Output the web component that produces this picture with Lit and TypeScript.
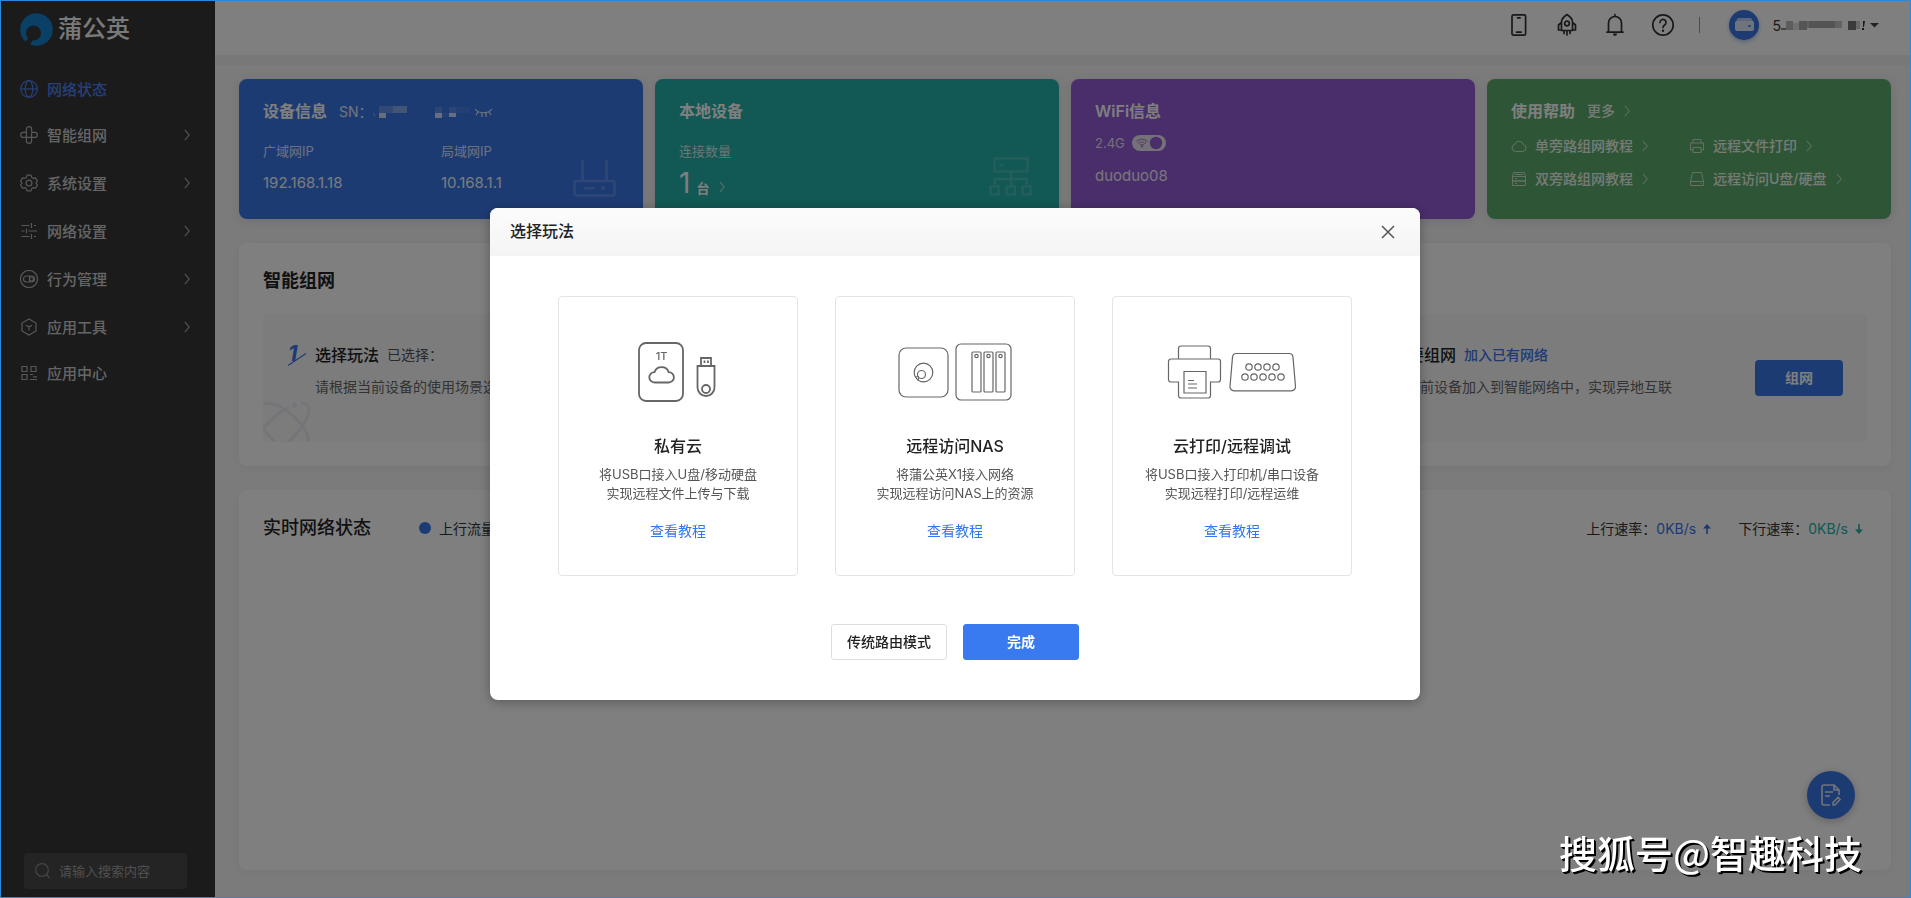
import { LitElement, html, css, svg, nothing } from "lit";
import { customElement } from "lit/decorators.js";

const chevron = html`<svg class="chev" viewBox="0 0 6 12" width="6" height="12" aria-hidden="true"><path d="M.8.8 5.2 6 .8 11.2" /></svg>`;

const navIcons: Record<string, unknown> = {
  globe: svg`<circle cx="9" cy="9" r="8.3"/><ellipse cx="9" cy="9" rx="3.8" ry="8.3"/><path d="M.7 9h16.6"/>`,
  mesh: svg`<path d="M6.4 11.4V3.2a2.6 2.6 0 0 1 5.2 0v2.6M6.4 6.4H3.2a2.5 2.5 0 0 0 0 5h8.2M11.6 6.4h3.2a2.5 2.5 0 0 1 0 5h-3.2M11.6 6.4v8.4a2.6 2.6 0 0 1-5.2 0V12"/>`,
  gear: svg`<circle cx="9" cy="9" r="2.9"/><path d="M7 1.2h4l.7 2.2 1.5.9 2.3-.5 1.9 3.3L15.9 9l1.5 1.9-1.9 3.3-2.300-.5-1.500.9-.7 2.200H7l-.7-2.200-1.500-.9-2.300.5L.6 10.900 2.100 9 .6 7.100l1.900-3.300 2.300.5 1.500-.9z" stroke-linejoin="round"/>`,
  sliders: svg`<path d="M1.500 3.500h8M14 3.500h2M11.500 1v5M1.500 9h3M8.500 9H17M6.500 6.700v4.600M1.500 14.500h8M14 14.500h2M11.500 12v5"/>`,
  behavior: svg`<circle cx="9" cy="9" r="8.500"/><rect x="3.500" y="6" width="11" height="6" rx="3"/><path d="M9.500 6v6"/><circle cx="11.500" cy="9" r="2"/>`,
  cube: svg`<path d="M9 1l7 4v8l-7 4-7-4V5zM6 7.200l3 1.900 3-1.900M9 9v3.500"/>`,
  apps: svg`<path d="M2 2.500h5v5H2zM11 2.500h5v5h-5zM2 10.500h5v5H2zM10 10.500h3M13 12.800h4M10 15.500h7"/>`,
};

interface NavItem { label: string; icon: string; sub?: boolean; on?: boolean }
const nav: NavItem[] = [
  { label: "网络状态", icon: "globe", on: true },
  { label: "智能组网", icon: "mesh", sub: true },
  { label: "系统设置", icon: "gear", sub: true },
  { label: "网络设置", icon: "sliders", sub: true },
  { label: "行为管理", icon: "behavior", sub: true },
  { label: "应用工具", icon: "cube", sub: true },
  { label: "应用中心", icon: "apps" },
];

@customElement("side-nav")
class SideNav extends LitElement {
  static styles = css`
    :host { display: flex; flex-direction: column; width: 215px; flex: none; background: #363636; box-sizing: border-box; }
    .logo { display: flex; align-items: center; gap: 5px; padding: 11px 20px 0; height: 36px; color: #fff; font-size: 24px; line-height: 36px; font-weight: 500; opacity: .95; }
    .logo svg { flex: none; }
    nav { display: flex; flex-direction: column; padding-top: 20px; }
    .item { display: flex; align-items: center; height: 44px; padding: 0 25px 0 20px; color: #cccccc; font-size: 15px; font-weight: 500; text-decoration: none; }
    .sub { height: 48px; }
    .item svg { fill: none; stroke: #b0b0b0; stroke-width: 1.2; flex: none; }
    .item span { flex: 1; margin: 0 0 2px 9px; }
    .item .chev { stroke: #a0a0a0; stroke-width: 1.2; }
    .item.on { color: #4a82f0; }
    .item.on svg { stroke: #4a82f0; }
    .search { display: flex; align-items: center; gap: 9px; margin: auto 28px 9px 24px; height: 36px; padding: 0 11px; border-radius: 4px; background: #484848; }
    .search svg { flex: none; fill: none; stroke: #8a8a8a; stroke-width: 1.2; }
    input { flex: 1; min-width: 0; border: 0; padding: 0; outline: 0; background: none; color: #fff; font: inherit; font-size: 13px; }
    input::placeholder { color: #a0a0a0; opacity: 1; }
  `;
  render() {
    return html`
      <div class="logo">
        <svg width="33" height="33" viewBox="0 0 33 33" aria-hidden="true">
          <circle cx="16.500" cy="16.500" r="16.300" fill="#1484d6" />
          <circle cx="13.500" cy="20" r="7.500" fill="#363636" />
          <path d="M8.500 24.500 4.800 30l4.500 3 3.400-6z" fill="#363636" />
        </svg>
        <span>蒲公英</span>
      </div>
      <nav>
        ${nav.map((n) => html`
          <a href="#" class="item ${n.sub ? "sub" : ""} ${n.on ? "on" : ""}">
            <svg width="18" height="18" viewBox="0 0 18 18" aria-hidden="true">${navIcons[n.icon]}</svg>
            <span>${n.label}</span>${n.sub ? chevron : nothing}
          </a>`)}
      </nav>
      <label class="search">
        <svg width="15" height="16" viewBox="0 0 15 16" aria-hidden="true"><circle cx="7" cy="7" r="6.300" /><path d="M11.500 11.500 14.500 15" /></svg>
        <input type="text" placeholder="请输入搜索内容" aria-label="搜索" />
      </label>`;
  }
}

@customElement("top-bar")
class TopBar extends LitElement {
  static styles = css`
    :host { display: flex; align-items: flex-start; justify-content: flex-end; height: 55px; flex: none; background: #fff; box-shadow: 0 10px 0 #f0f0f0; padding-right: 32px; box-sizing: border-box; }
    .row { display: flex; align-items: center; height: 50px; }
    button { border: 0; background: none; padding: 0; font: inherit; color: #333; display: flex; align-items: center; justify-content: center; }
    .ico { width: 48px; height: 48px; }
    .ico svg { fill: none; stroke: #333; stroke-width: 1.7; stroke-linejoin: round; stroke-linecap: round; }
    .ico .solid { fill: #333; stroke: none; }
    .bar { width: 1px; height: 16px; background: #999; margin: 0 29px 0 12px; }
    .avatar { width: 30px; height: 30px; border-radius: 50%; background: #3a76e2; box-shadow: 0 2px 4px rgba(58, 118, 226, .4); display: flex; align-items: center; justify-content: center; }
    .user { margin-left: 13px; font-size: 14px; }
    .user .caret { margin-left: 5px; }
  `;
  render() {
    return html`<div class="row">
      <button class="ico" aria-label="手机"><svg width="24" height="24" viewBox="0 0 24 24"><rect x="5" y="1.800" width="13.600" height="20.400" rx="1.500" /><path d="M10.500 4.800h2.600M9.500 19.200h4.600" /></svg></button>
      <button class="ico" aria-label="加速"><svg width="24" height="24" viewBox="0 0 24 24"><path d="M6.500 17.500V9c0-3 2.500-5.500 5.500-7.500 3 2 5.500 4.500 5.500 7.500v8.500zM6.500 9.500 3.500 12v5h3M17.500 9.500l3 2.500v5h-3M9 18v2.500M12 18v4M15 18v2.500" /><circle cx="12" cy="10.500" r="2.300" /></svg></button>
      <button class="ico" aria-label="消息"><svg width="24" height="24" viewBox="0 0 24 24"><path d="M4 19.200h16M5.500 19V10a6.500 6.500 0 0 1 13 0v9M12 1.500v2" /><path class="solid" d="M9.800 20.500h4.400l-1 2.200h-2.400z" /></svg></button>
      <button class="ico" aria-label="帮助"><svg width="24" height="24" viewBox="0 0 24 24"><circle cx="12" cy="12" r="10.200" /><path d="M9 9.500a3 3 0 1 1 4.600 2.500c-1 .7-1.600 1.200-1.600 2.500" /><circle class="solid" cx="12" cy="17.700" r="1.200" /></svg></button>
      <span class="bar"></span>
      <span class="avatar"><svg width="19" height="14" viewBox="0 0 19 14" aria-hidden="true"><path d="M3 0h13l2.500 4H.5z" fill="#b8cdf5" /><rect y="3" width="19" height="10" rx="2" fill="#e0e9fb" /><path d="M13 8h3" stroke="#3a76e2" stroke-width="1.500" /></svg></span>
      <button class="user" aria-label="账号">5
        <svg width="84" height="12" viewBox="0 0 84 12" aria-hidden="true">
          <path d="M0 9h6v2H0z" fill="#888" /><path d="M5 2h7v9H5z" fill="#bbb" /><path d="M12 4h7v7h-7z" fill="#e0e0e0" /><path d="M18 2h8v9h-8z" fill="#aaa" /><path d="M26 2h35v7H26z" fill="#c4c4c4" /><path d="M28 2h26v7H28z" fill="#a9a9a9" /><path d="M67 2h8v9h-8z" fill="#777" /><path d="M75 2h4v8h-4z" fill="#d0d0d0" /><path d="M82 2h2l-1 6h-1zM81 9h2v2h-2z" fill="#333" />
        </svg>
        <svg class="caret" width="9" height="5" viewBox="0 0 9 5" aria-hidden="true"><path d="M0 0h9L4.500 4.500z" fill="#444" /></svg>
      </button>
    </div>`;
  }
}

const helpIcons = {
  cloud: svg`<path d="M4.500 13.500a3.700 3.700 0 0 1-.6-7.300 4.300 4.300 0 0 1 8.200 0 3.700 3.700 0 0 1-.6 7.300z"/>`,
  printer: svg`<path d="M4 5V1.500h8V5M4 12H1.500V5h13v7H12M4 9.500h8v5H4z"/>`,
  server: svg`<path d="M2.500 1.500h11l1 4h-13zM1.500 5.500h13v4.500h-13zM1.500 10h13v4.500h-13zM4 7.700h2M4 12.300h2M4 3.500h8"/>`,
  disk: svg`<path d="M3.500 1.500h9l2 9v4h-13v-4zM1.500 10.500h13M11.500 12.600h1"/>`,
};
const help = [
  { t: "单旁路组网教程", i: helpIcons.cloud },
  { t: "远程文件打印", i: helpIcons.printer },
  { t: "双旁路组网教程", i: helpIcons.server },
  { t: "远程访问U盘/硬盘", i: helpIcons.disk },
];

@customElement("info-cards")
class InfoCards extends LitElement {
  static styles = css`
    :host { display: grid; grid-template-columns: repeat(4, minmax(0, 1fr)); gap: 12px; }
    .card { position: relative; min-height: 140px; box-sizing: border-box; padding: 20px 24px 0; border-radius: 8px; color: #fff; box-shadow: 0 2px 10px rgba(60, 40, 120, .12); }
    .blue { background: #3b77e6; }
    .teal { background: #24b0a8; }
    .purple { background: #925cd6; }
    .green { background: #5cac6c; }
    .head { display: flex; align-items: center; height: 24px; gap: 12px; }
    h2 { margin: 0; font-size: 16px; line-height: 24px; font-weight: 600; }
    .sn { display: flex; align-items: center; font-size: 14px; opacity: .85; }
    .two { display: grid; grid-template-columns: 1fr 1fr; }
    dl { margin: 12px 0 0; }
    dt { font-size: 13px; line-height: 20px; opacity: .8; padding-top: 6px; }
    dd { margin: 0; font-size: 15px; line-height: 20px; padding-top: 12px; opacity: .95; }
    .art { position: absolute; right: 27px; bottom: 22px; fill: none; stroke: #fff; opacity: .16; stroke-width: 2.6; }
    .chev { fill: none; stroke: currentColor; stroke-width: 1.1; opacity: .6; }
    .count { display: flex; align-items: baseline; gap: 6px; font-size: 28px; line-height: 32px; padding-top: 6px; }
    .count b { font-size: 13px; font-weight: 600; }
    .count .chev { margin-left: 4px; }
    .wifi { display: flex; align-items: center; gap: 7px; font-size: 13px; line-height: 20px; margin-top: 10px; }
    .wifi span { opacity: .8; }
    .switch { position: relative; display: flex; }
    .switch input { position: absolute; inset: 0; margin: 0; opacity: 0; }
    .name { font-size: 15px; line-height: 20px; margin-top: 13px; opacity: .9; }
    a { color: inherit; text-decoration: none; display: flex; align-items: center; font-size: 14px; font-weight: 500; line-height: 20px; opacity: .9; }
    .more { gap: 9px; }
    .links { display: grid; grid-template-columns: 1fr 1fr; row-gap: 13px; margin-top: 13px; }
    .links .lead { fill: none; stroke: #fff; opacity: .75; margin-right: 8px; }
    .links .chev { margin-left: 9px; }
  `;
  render() {
    return html`
      <section class="card blue">
        <div class="head"><h2>设备信息</h2>
          <div class="sn">SN：
            <svg width="120" height="14" viewBox="0 0 120 14" aria-hidden="true">
              <g fill="#fff"><path d="M6 2h14v7H6z" opacity=".25" /><path d="M20 2h14v7H20z" opacity=".45" /><path d="M6 9h7v5H6z" opacity=".9" /><path d="M0 8l3 4H1z" opacity=".4" /><path d="M62 3h7v6h-7zM76 3h7v6h-7z" opacity=".18" /><path d="M62 9h7v5h-7zM76 9h7v4h-7z" opacity=".9" /><path d="M83 3h14v6H83zM69 9h7v4h-7z" opacity=".08" /></g>
              <path d="M102 5c4 5 13 5 17 0M105 8l-2 3M109 9v4M113 9v4M116 8l2 3" fill="none" stroke="#fff" stroke-width="1.200" />
            </svg>
          </div>
        </div>
        <div class="two">
          <dl><dt>广域网IP</dt><dd>192.168.1.18</dd></dl>
          <dl><dt>局域网IP</dt><dd>10.168.1.1</dd></dl>
        </div>
        <svg class="art" width="43" height="38" viewBox="0 0 43 38" aria-hidden="true"><rect x="1.500" y="22" width="40" height="14.500" rx="2" /><path d="M9.500 1v21M33.500 1v21M11 29.200h11" /><circle cx="30" cy="29.200" r=".8" /></svg>
      </section>
      <section class="card teal">
        <div class="head"><h2>本地设备</h2></div>
        <dl><dt>连接数量</dt></dl>
        <div class="count">1<b>台</b>${chevron}</div>
        <svg class="art" width="43" height="40" viewBox="0 0 43 40" aria-hidden="true"><path d="M5.500 1.500h33v13h-33zM10 8h5M22 15v14M5.800 28v-6h32v6M1.500 29.500h8v8h-8zM17.800 29.500h8v8h-8zM33.500 29.500h8v8h-8z" /></svg>
      </section>
      <section class="card purple">
        <div class="head"><h2>WiFi信息</h2></div>
        <div class="wifi"><span>2.4G</span>
          <label class="switch"><input type="checkbox" role="switch" aria-label="2.4G" checked />
            <svg width="34" height="16" viewBox="0 0 34 16" aria-hidden="true"><rect width="34" height="16" rx="8" fill="#e9e4f0" /><circle cx="24" cy="8" r="6.200" fill="#925cd6" /><g fill="none" stroke="#a88bcb" stroke-width="1.100"><path d="M4.500 6.500q5.500-4.500 11 0M6.200 8.500q3.800-3 7.600 0M8 10.300q2-1.500 4 0" /></g><circle cx="10" cy="11.500" r=".9" fill="#925cd6" /></svg>
          </label>
        </div>
        <div class="name">duoduo08</div>
      </section>
      <section class="card green">
        <div class="head"><h2>使用帮助</h2><a href="#" class="more">更多 ${chevron}</a></div>
        <div class="links">${help.map((h) => html`<a href="#"><svg class="lead" width="16" height="16" viewBox="0 0 16 16" aria-hidden="true">${h.i}</svg>${h.t}${chevron}</a>`)}</div>
      </section>`;
  }
}

const plays = [
  {
    title: "私有云", lines: ["将USB口接入U盘/移动硬盘", "实现远程文件上传与下载"],
    art: html`<svg width="80" height="60" viewBox="0 0 80 60"><g stroke-width="1.800"><rect x="1" y="1" width="44" height="58" rx="7" /><path d="M16.500 40.500a5.200 5.200 0 0 1 0-10.400 7.600 7.600 0 0 1 14.200 0 5.200 5.200 0 0 1 0 10.400z" /><path d="M59.500 24h17v21.500a8.500 8.500 0 0 1-17 0zM63 24v-8h10v8" /><circle cx="68" cy="47" r="4" /><path d="M66.500 18.500v2.500M70 18.500v2.500" /></g><text x="23.500" y="17.500">1T</text></svg>`,
  },
  {
    title: "远程访问NAS", lines: ["将蒲公英X1接入网络", "实现远程访问NAS上的资源"],
    art: html`<svg width="114" height="60" viewBox="0 0 114 60"><g stroke-width="1.200"><rect x="1" y="6" width="49" height="49" rx="7" /><rect x="58" y="2" width="55" height="56" rx="5" /><circle cx="25.500" cy="30.500" r="9.300" /><circle cx="23.500" cy="32.500" r="4" /><path d="M17 35l4-.5M20 38.500l.5-2.500" /><rect x="74" y="10" width="9" height="40" rx="1" /><rect x="86" y="10" width="9" height="40" rx="1" /><rect x="98" y="10" width="9" height="40" rx="1" /><circle cx="78.500" cy="14" r="1.700" /><circle cx="90.500" cy="14" r="1.700" /><circle cx="102.500" cy="14" r="1.700" /></g></svg>`,
  },
  {
    title: "云打印/远程调试", lines: ["将USB口接入打印机/串口设备", "实现远程打印/远程运维"],
    art: html`<svg width="130" height="60" viewBox="0 0 130 60"><g stroke-width="1.200"><path d="M11.500 17V6.500a2.500 2.500 0 0 1 2.500-2.500h27a2.500 2.500 0 0 1 2.500 2.500V17M11.500 40H4a2.500 2.500 0 0 1-2.500-2.500v-18A2.500 2.500 0 0 1 4 17h47a2.500 2.500 0 0 1 2.500 2.500v18a2.500 2.500 0 0 1-2.500 2.500h-7.500v13.500a2.500 2.500 0 0 1-2.500 2.500H14a2.500 2.500 0 0 1-2.500-2.500zM17 29.500h22v21.500H17zM21 38.500h6M21 42h9M21 46h9" /><path d="M69.500 11.500h52.500a4 4 0 0 1 4 3.600l2.500 29.400a4 4 0 0 1-4 4.300H67a4 4 0 0 1-4-4.300l2.500-29.400a4 4 0 0 1 4-3.600z" />${[82, 91, 100, 109].map((x) => svg`<circle cx=${x} cy="25" r="3.200"/>`)}${[78, 87, 96, 105, 114].map((x) => svg`<circle cx=${x} cy="35" r="3.200"/>`)}</g></svg>`,
  },
];

@customElement("play-dialog")
class PlayDialog extends LitElement {
  static styles = css`
    :host { position: fixed; inset: 0; background: rgba(0, 0, 0, .5); display: grid; place-items: center; padding: 10px 1px 0 0; box-sizing: border-box; }
    .box { width: 930px; max-width: 96vw; background: #fff; border-radius: 8px; overflow: hidden; box-shadow: 0 2px 12px rgba(0, 0, 0, .3); }
    header { display: flex; align-items: center; justify-content: space-between; height: 48px; padding: 0 24px 0 20px; background: linear-gradient(#fcfcfc, #f4f4f4); }
    h2 { margin: 0; font-size: 16px; line-height: 24px; font-weight: 500; color: #222; padding-bottom: 2px; }
    button { font: inherit; padding: 0; }
    .close { border: 0; background: none; display: flex; width: 16px; height: 16px; align-items: center; justify-content: center; }
    .close svg { stroke: #555; stroke-width: 1.5; fill: none; }
    .cards { display: flex; justify-content: center; gap: 37px; padding: 40px 20px 48px; }
    .card { width: 240px; min-height: 280px; box-sizing: border-box; border: 1px solid #e4e4e4; border-radius: 4px; display: flex; flex-direction: column; align-items: center; padding-top: 45px; text-align: center; }
    .card svg { fill: none; stroke: #666; }
    .card svg text { font-size: 11px; font-weight: 500; fill: #666; stroke: none; text-anchor: middle; }
    h3 { margin: 32px 0 7px; font-size: 16px; line-height: 24px; font-weight: 500; color: #222; }
    p { margin: 0; font-size: 13px; line-height: 19px; color: #555; }
    a { margin-top: 18px; font-size: 14px; line-height: 20px; color: #3577ee; text-decoration: none; }
    footer { display: flex; justify-content: center; gap: 16px; padding-bottom: 40px; }
    .btn { width: 116px; height: 36px; border-radius: 3px; font-size: 14px; font-weight: 500; border: 1px solid #dedede; background: #fff; color: #222; padding-bottom: 2px; }
    .primary { background: #3a7af0; border-color: #3a7af0; color: #fff; font-weight: 600; }
  `;
  render() {
    return html`<div class="box" role="dialog" aria-modal="true" aria-labelledby="t">
      <header><h2 id="t">选择玩法</h2>
        <button class="close" aria-label="关闭"><svg width="14" height="14" viewBox="0 0 14 14"><path d="M1 1l12 12M13 1 1 13" /></svg></button></header>
      <div class="cards">${plays.map((p) => html`<article class="card">${p.art}<h3>${p.title}</h3>${p.lines.map((l) => html`<p>${l}</p>`)}<a href="#">查看教程</a></article>`)}</div>
      <footer><button class="btn">传统路由模式</button><button class="btn primary">完成</button></footer>
    </div>`;
  }
}

@customElement("app-root")
class AppRoot extends LitElement {
  static styles = css`
    :host { display: flex; min-height: 100vh; background: #f6f6f6; color: #333; font-family: Inter, "Noto Sans CJK SC", sans-serif; }
    .main { flex: 1; min-width: 0; display: flex; flex-direction: column; }
    .content { flex: 1; display: flex; flex-direction: column; gap: 24px; padding: 24px 20px 28px 24px; }
    .panel { background: #fff; border-radius: 8px; padding: 24px; box-shadow: 0 2px 10px rgba(0, 0, 0, .04); }
    h2 { margin: 0; font-size: 18px; line-height: 28px; font-weight: 600; color: #222; }
    .steps { position: relative; display: flex; align-items: stretch; justify-content: space-between; min-height: 128px; box-sizing: border-box; margin-top: 19px; padding: 28px 24px 0; background: #f9f9f9; border-radius: 4px; }
    .orbit { position: absolute; left: 0; bottom: 0; fill: none; stroke: #e7eaf3; stroke-width: 2.8; }
    .step { display: flex; gap: 6px; }
    .num { flex: none; width: 22px; height: 26px; overflow: visible; }
    .num text { font-size: 22px; font-weight: 700; font-style: italic; fill: #3a74e8; }
    .num path { stroke: #3a74e8; stroke-width: 1.2; }
    .line { display: flex; align-items: center; gap: 8px; height: 24px; font-size: 14px; color: #555; }
    .line b { font-size: 16px; font-weight: 500; color: #222; }
    .line a { color: #3a74e8; text-decoration: none; font-weight: 500; }
    p { margin: 11px 0 0; font-size: 14px; line-height: 20px; color: #666; }
    .go { margin: 18px 0 0 77px; width: 88px; height: 36px; border: 0; border-radius: 4px; background: #3b77e6; color: #fff; font: inherit; font-size: 14px; font-weight: 600; padding: 0 0 2px; }
    .traffic { flex: 1; }
    .bar { display: flex; align-items: center; font-size: 14px; }
    .bar h2 { font-weight: 500; }
    .bar i { width: 12px; height: 12px; border-radius: 50%; background: #3b77e6; margin: 0 8px 0 48px; }
    .rates { margin-left: auto; display: flex; gap: 27px; padding-right: 4px; }
    .rates span { display: flex; align-items: center; }
    .rates em { font-style: normal; margin-right: 7px; }
    .rates svg { margin-top: 2px; }
    .up { color: #3a74e8; fill: #3a74e8; }
    .down { color: #24b0a8; fill: #24b0a8; }
    .fab { position: fixed; right: 56px; bottom: 79px; width: 48px; height: 48px; border: 0; padding: 0; border-radius: 50%; background: #3b77e6; display: flex; align-items: center; justify-content: center; box-shadow: 0 2px 8px rgba(0, 0, 0, .25); }
    .fab svg { fill: none; stroke: #e4e9f5; stroke-width: 1.6; }
    .frame { position: fixed; inset: 0; border: 1px solid #2b86dc; pointer-events: none; }
    .mark { position: fixed; right: 49px; bottom: 18px; font-family: "Noto Sans CJK SC", sans-serif; font-size: 38px; line-height: 56px; font-weight: 500; color: #fff; text-shadow: 2px 2px 0 #000, 1px 1px 0 #000; pointer-events: none; }
  `;
  render() {
    return html`
      <side-nav></side-nav>
      <div class="main">
        <top-bar></top-bar>
        <div class="content">
          <info-cards></info-cards>
          <section class="panel">
            <h2>智能组网</h2>
            <div class="steps">
              <svg class="orbit" width="48" height="40" viewBox="0 0 48 40" aria-hidden="true"><path d="M0 2C18-2 44 22 46 40M26 5C16 10 4 20-2 30M38 1.500c10-1 10 8 4 18C37 29 30 36 24 41M0 26c3 5 7 9 12 14" /><circle cx="31.500" cy="3" r="1.300" /></svg>
              <div class="step">
                <svg class="num" viewBox="0 0 22 26" aria-hidden="true"><text x="1" y="19">1</text><path d="M1 23.500 19 11.500" /></svg>
                <div><div class="line"><b>选择玩法</b>已选择：</div><p>请根据当前设备的使用场景选择玩法</p></div>
              </div>
              <div class="step">
                <div><div class="line"><b>需要组网</b><a href="#">加入已有网络</a></div><p>将当前设备加入到智能网络中，实现异地互联</p></div>
                <button class="go">组网</button>
              </div>
            </div>
          </section>
          <section class="panel traffic">
            <div class="bar"><h2>实时网络状态</h2><i></i>上行流量
              <div class="rates">
                <span>上行速率：<em class="up">0KB/s</em><svg class="up" width="8" height="10" viewBox="0 0 8 10" aria-hidden="true"><path d="M4 0l4 4.500H4.800V10H3.200V4.500H0z" /></svg></span>
                <span>下行速率：<em class="down">0KB/s</em><svg class="down" width="8" height="10" viewBox="0 0 8 10" aria-hidden="true"><path d="M4 10 0 5.500h3.200V0h1.600v5.500H8z" /></svg></span>
              </div>
            </div>
          </section>
        </div>
      </div>
      <button class="fab" aria-label="反馈"><svg width="22" height="24" viewBox="0 0 22 24"><path d="M10 22H4a2 2 0 0 1-2-2V4a2 2 0 0 1 2-2h10l5 5v5M14 2v5h5M5 9h8M5 13h5M13 22v-2.500l5-5 2 2-5 5.500z" /></svg></button>
      <play-dialog></play-dialog>
      <div class="frame"></div>
      <div class="mark">搜狐号@智趣科技</div>`;
  }
}
